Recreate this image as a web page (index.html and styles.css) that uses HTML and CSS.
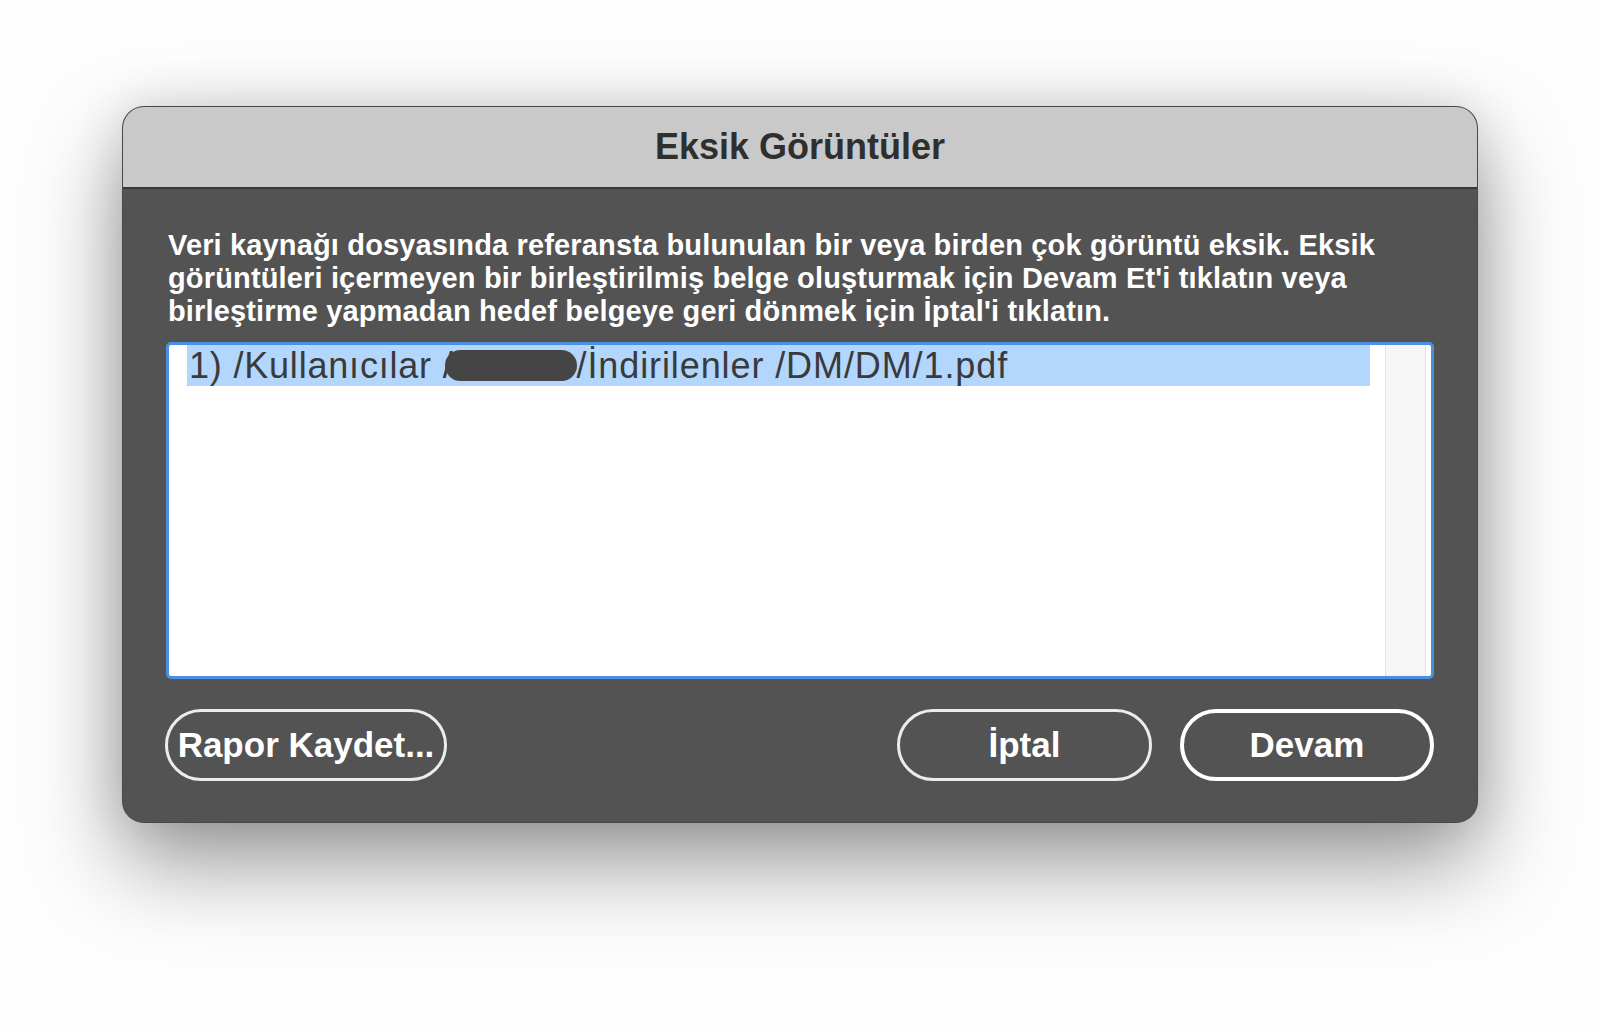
FILE: index.html
```html
<!DOCTYPE html>
<html lang="tr">

<head>
    <meta charset="UTF-8">
    <meta name="viewport" content="width=device-width, initial-scale=1.0">
    <title>Eksik Görüntüler</title>
    <link rel="stylesheet" href="styles.css">
</head>

<body>
    <div class="dialog">
        <div class="title-bar">
            <h1>Eksik Görüntüler</h1>
        </div>

        <div class="dialog-body">
            <p class="message">
                Veri kaynağı dosyasında referansta bulunulan bir veya birden çok görüntü eksik. Eksik
                görüntüleri içermeyen bir birleştirilmiş belge oluşturmak için Devam Et'i tıklatın veya
                birleştirme yapmadan hedef belgeye geri dönmek için İptal'i tıklatın.
            </p>

            <div class="list-box">
                <div class="list-items">
                    <div class="list-row selected">
                        <span class="path-head">1) /Kullanıcılar /</span><span class="redacted"></span><span class="path-tail">/İndirilenler /DM/DM/1.pdf</span>
                    </div>
                </div>
                <div class="scroll-track"></div>
            </div>

            <div class="button-group">
                <button type="button" class="save-report-btn">Rapor Kaydet...</button>
                <div class="right-buttons">
                    <button type="button" class="cancel-btn">İptal</button>
                    <button type="button" class="continue-btn">Devam</button>
                </div>
            </div>
        </div>
    </div>
</body>

</html>
```

FILE: styles.css
```css
* {
    margin: 0;
    padding: 0;
    box-sizing: border-box;
    font-family: 'Liberation Sans', Arial, sans-serif;
}

body {
    background: #fdfdfd;
    padding-top: 106px;
    height: 1033px;
    overflow: hidden;
}

.dialog {
    width: 1356px;
    margin: 0 auto;
    background: #535353;
    border-radius: 22px;
    border: 1px solid rgba(0, 0, 0, 0.12);
    box-shadow: 0 40px 90px rgba(0, 0, 0, 0.4), 0 0 50px rgba(0, 0, 0, 0.12);
    overflow: hidden;
}

.title-bar {
    height: 82px;
    background: #c9c9c9;
    border-bottom: 2px solid #383838;
    display: flex;
    align-items: center;
    justify-content: center;
}

h1 {
    font-size: 36px;
    font-weight: bold;
    color: #2f2f2f;
}

.dialog-body {
    padding: 40px 43px 41px 43px;
}

.message {
    color: #fff;
    font-size: 29px;
    font-weight: bold;
    line-height: 33px;
    letter-spacing: 0.15px;
    padding-left: 2px;
}

.list-box {
    margin-top: 14px;
    height: 337px;
    background: #fff;
    border: 3px solid #4a8fe0;
    border-radius: 5px;
    display: flex;
}

.list-items {
    flex: 1;
    padding: 0 15px 0 18px;
}

.list-row {
    height: 41px;
    display: flex;
    align-items: center;
    padding-left: 2px;
    font-size: 36px;
    color: #3a3a3a;
    white-space: nowrap;
}

.list-row.selected {
    background: #b3d6fd;
}

.path-head {
    letter-spacing: 0.8px;
}

.path-tail {
    letter-spacing: 0.9px;
}

.redacted {
    display: inline-block;
    width: 132px;
    height: 31px;
    margin-left: -9px;
    border-radius: 16px;
    background: #454545;
}

.scroll-track {
    width: 41px;
    margin-right: 5px;
    background: #f6f6f6;
    border-left: 1px solid #e1e1e1;
    border-right: 1px solid #e6e6e6;
}

.button-group {
    display: flex;
    justify-content: space-between;
    margin-top: 30px;
}

.right-buttons {
    display: flex;
    gap: 28px;
}

button {
    height: 72px;
    background: transparent;
    color: #fff;
    font-size: 35px;
    font-weight: bold;
    border: 3px solid #ececec;
    border-radius: 36px;
    cursor: pointer;
}

.save-report-btn {
    width: 282px;
    margin-left: -1px;
}

.cancel-btn {
    width: 255px;
}

.continue-btn {
    width: 254px;
    border: 4px solid #fff;
}
```
